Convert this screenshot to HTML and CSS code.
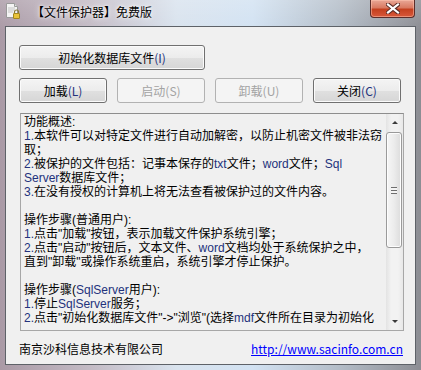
FILE: index.html
```html
<!DOCTYPE html>
<html>
<head>
  <meta charset="utf-8">
  <title>【文件保护器】免费版</title>
  <link rel="stylesheet" href="styles.css">
</head>
<body>
  <div class="window">
    <div class="titlebar">
      <svg class="app-icon" width="16" height="16" viewBox="0 0 16 16">
        <path d="M1.5 0.5h8l3 3v11h-11z" fill="#f4f4f4" stroke="#9a9a9a"/>
        <path d="M9.5 0.5v3h3" fill="#dcdcdc" stroke="#9a9a9a"/>
        <path d="M3 5h7M3 7h7M3 9h5" stroke="#c4c4c4"/>
        <path d="M9.5 10.5v-1.5a2 2 0 0 1 4 0v1.5" fill="none" stroke="#8a7a3a" stroke-width="1.2"/>
        <rect x="8.5" y="10.5" width="6" height="5" rx="0.5" fill="#e8c23a" stroke="#a4861c"/>
      </svg>
      <span class="title">【文件保护器】免费版</span>
      <div class="close-btn">
        <svg width="14" height="11" viewBox="0 0 14 11">
          <path d="M2 1.5l10 8M12 1.5l-10 8" stroke="#5a2a24" stroke-width="4.2" stroke-linecap="square"/>
          <path d="M2 1.5l10 8M12 1.5l-10 8" stroke="#ffffff" stroke-width="2.2" stroke-linecap="square"/>
        </svg>
      </div>
    </div>

    <div class="client">
      <button class="btn btn-wide">初始化数据库文件<span class="en">(I)</span></button>
      <div class="btn-row">
        <button class="btn">加载<span class="en">(L)</span></button>
        <button class="btn" disabled>启动(S)</button>
        <button class="btn" disabled>卸载(U)</button>
        <button class="btn">关闭<span class="en">(C)</span></button>
      </div>

      <div class="memo">
        <div class="memo-text">
          <div>功能概述:</div>
          <div><span class="en">1.</span>本软件可以对特定文件进行自动加解密，以防止机密文件被非法窃</div>
          <div>取；</div>
          <div><span class="en">2.</span>被保护的文件包括：记事本保存的<span class="en">txt</span>文件；<span class="en">word</span>文件；<span class="en">Sql</span></div>
          <div><span class="en">Server</span>数据库文件；</div>
          <div><span class="en">3.</span>在没有授权的计算机上将无法查看被保护过的文件内容。</div>
          <div>&nbsp;</div>
          <div>操作步骤(普通用户):</div>
          <div><span class="en">1.</span>点击"加载"按钮，表示加载文件保护系统引擎；</div>
          <div><span class="en">2.</span>点击"启动"按钮后，文本文件、<span class="en">word</span>文档均处于系统保护之中，</div>
          <div>直到"卸载"或操作系统重启，系统引擎才停止保护。</div>
          <div>&nbsp;</div>
          <div>操作步骤(<span class="en">SqlServer</span>用户):</div>
          <div><span class="en">1.</span>停止<span class="en">SqlServer</span>服务；</div>
          <div><span class="en">2.</span>点击"初始化数据库文件"-&gt;"浏览"(选择<span class="en">mdf</span>文件所在目录为初始化</div>
        </div>
        <div class="scrollbar">
          <div class="sb-arrow"><span class="tri-up"></span></div>
          <div class="sb-track">
            <div class="sb-thumb"><span class="grip"></span></div>
          </div>
          <div class="sb-arrow"><span class="tri-down"></span></div>
        </div>
      </div>

      <div class="footer">
        <span class="company">南京沙科信息技术有限公司</span>
        <a class="link" href="#">http://www.sacinfo.com.cn</a>
      </div>
    </div>
  </div>
</body>
</html>
```

FILE: styles.css
```css
body {
  margin: 0;
  font-family: "Noto Sans CJK SC", "Noto Sans", sans-serif;
  font-size: 12px;
}

.window {
  width: 421px;
  height: 370px;
  overflow: hidden;
  background:
    linear-gradient(180deg, rgba(255, 255, 255, 0.18) 0%, rgba(255, 255, 255, 0) 30px),
    linear-gradient(90deg, #aa9aa6 0%, #c4bcc6 22%, #d9e3ee 42%, #d2e2f2 60%, #b4bec9 80%, #8c8d93 100%);
}

.titlebar {
  height: 26px;
  display: flex;
  align-items: flex-start;
  padding: 0 6px 0 5px;
}

.app-icon {
  margin-top: 3px;
}

.title {
  margin: 4px 0 0 11px;
  line-height: 15px;
  color: #000;
  text-shadow: 0 0 6px rgba(255, 255, 255, 0.9), 0 0 3px rgba(255, 255, 255, 0.9);
}

.close-btn {
  margin-left: auto;
  width: 43px;
  height: 17px;
  border: 1px solid #5b2d2a;
  border-top: none;
  border-radius: 0 0 4px 4px;
  background: linear-gradient(180deg, #e9a796 0%, #d97a62 45%, #c4401f 55%, #d8583a 100%);
  box-shadow: inset 0 0 0 1px rgba(255, 200, 180, 0.5);
  display: flex;
  align-items: center;
  justify-content: center;
}

.client {
  height: 339px;
  margin: 0 5px;
  box-sizing: border-box;
  border: 1px solid #5e6268;
  background-color: #f0f0f0;
  padding: 18px 13px 0 13px;
}

.btn {
  display: block;
  height: 25px;
  padding: 0;
  border: 1px solid #707070;
  border-radius: 3px;
  background: linear-gradient(180deg, #f4f4f4 0%, #ececec 50%, #e0e0e0 51%, #d6d6d6 100%);
  box-shadow: inset 0 0 0 1px #fbfbfb;
  font-family: "Noto Sans CJK SC", "Noto Sans", sans-serif;
  font-size: 12px;
  line-height: 14px;
  color: #000;
}

.btn:disabled {
  border-color: #b2b2b2;
  background: #f4f4f4;
  box-shadow: none;
  color: #a3a3a3;
}

.btn-wide {
  width: 186px;
}

.btn-row {
  display: flex;
  gap: 10px;
  margin-top: 8px;
}

.btn-row .btn {
  width: 88px;
}

.en {
  color: #23327c;
}

.memo {
  display: flex;
  width: 384px;
  height: 218px;
  box-sizing: border-box;
  margin: 10px 0 0 1px;
  border: 1px solid #a7a7a7;
  border-top-color: #8d8d8d;
  background-color: #f0f0f0;
}

/* Liberation first keeps each line box within 14px; CJK falls back to Noto */
.memo-text {
  flex: 1;
  overflow: hidden;
  padding: 1px 0 0 3px;
  font-family: "Liberation Sans", "Noto Sans CJK SC", sans-serif;
  line-height: 14px;
  white-space: nowrap;
  color: #000;
}

.scrollbar {
  width: 17px;
  display: flex;
  flex-direction: column;
  background: linear-gradient(90deg, #e3e3e3 0%, #f2f2f2 30%, #f2f2f2 70%, #e8e8e8 100%);
}

.sb-arrow {
  height: 17px;
  display: flex;
  align-items: center;
  justify-content: center;
}

.tri-up {
  width: 0;
  height: 0;
  border-left: 3px solid transparent;
  border-right: 3px solid transparent;
  border-bottom: 3px solid #3c3c3c;
}

.tri-down {
  width: 0;
  height: 0;
  border-left: 3px solid transparent;
  border-right: 3px solid transparent;
  border-top: 3px solid #3c3c3c;
}

.sb-track {
  flex: 1;
  padding-top: 1px;
}

.sb-thumb {
  height: 114px;
  margin: 0 1px 0 0;
  border: 1px solid #9a9a9a;
  border-radius: 3px;
  background: linear-gradient(90deg, #f6f6f6 0%, #ececec 50%, #dcdcdc 100%);
  box-shadow: inset 0 0 0 1px #fdfdfd;
  display: flex;
  align-items: center;
  justify-content: center;
}

.grip {
  width: 6px;
  height: 7px;
  background: repeating-linear-gradient(180deg, #6e6e6e 0, #6e6e6e 1px, #f4f4f4 1px, #f4f4f4 3px);
}

.footer {
  display: flex;
  justify-content: space-between;
  align-items: center;
  width: 384px;
  margin-top: 11px;
  line-height: 14px;
}

.company {
  color: #000;
}

.link {
  color: #0000ff;
  text-decoration: underline;
}
```
